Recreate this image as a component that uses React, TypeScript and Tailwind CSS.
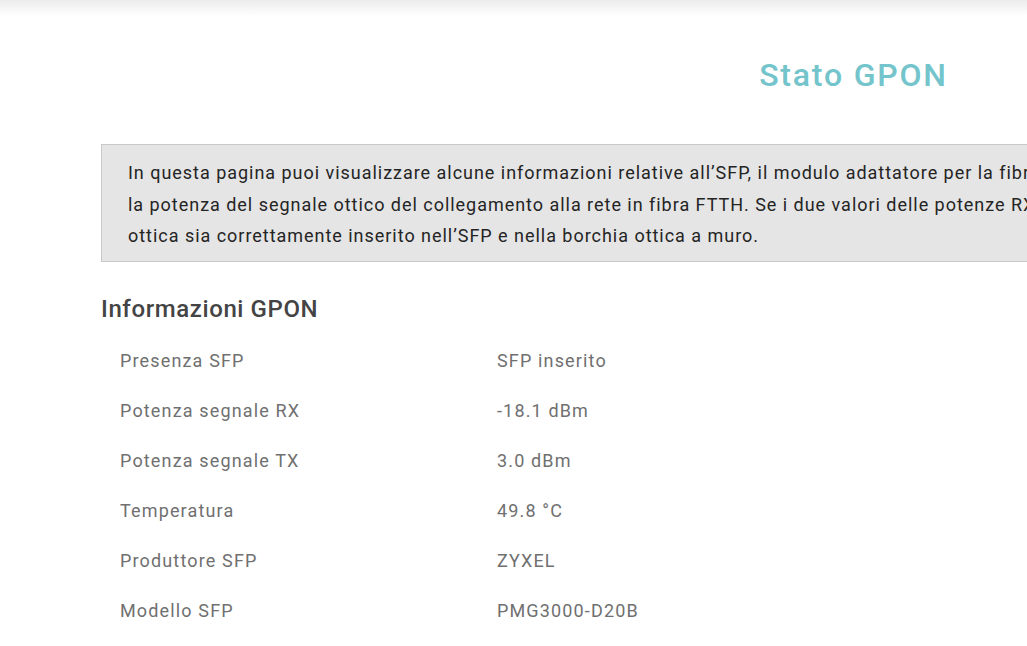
import React from 'react';

const rows: [string, string][] = [
  ['Presenza SFP', 'SFP inserito'],
  ['Potenza segnale RX', '-18.1 dBm'],
  ['Potenza segnale TX', '3.0 dBm'],
  ['Temperatura', '49.8 °C'],
  ['Produttore SFP', 'ZYXEL'],
  ['Modello SFP', 'PMG3000-D20B'],
];

export default function App() {
  return (
    <div className="relative h-[646px] w-full overflow-hidden bg-white font-['Roboto',sans-serif]">
      {/* header shadow */}
      <div className="h-[16px] w-full bg-gradient-to-b from-[#ececec] to-white" />

      <div className="ml-[101px] w-[1505px]">
        <h1 className="mt-[40px] text-center text-[32px] font-medium leading-[38px] tracking-[1.8px] text-[#73c4cb]">
          Stato GPON
        </h1>

        {/* info box */}
        <div className="mt-[50px] border border-[#c9c9c9] bg-[#e5e5e5] px-[26px] pb-[9px] pt-[12px] text-[18px] leading-[31.5px] tracking-[0.97px] text-[#242424]">
          <p className="whitespace-nowrap">
            In questa pagina puoi visualizzare alcune informazioni relative all’SFP, il modulo adattatore per la fibra ottica, come la temperatura e il modello, e verificare
          </p>
          <p className="whitespace-nowrap">
            la potenza del segnale ottico del collegamento alla rete in fibra FTTH. Se i due valori delle potenze RX e TX non sono corretti, verifica che il cavo in fibra
          </p>
          <p className="whitespace-nowrap">
            ottica sia correttamente inserito nell’SFP e nella borchia ottica a muro.
          </p>
        </div>

        <h2 className="mt-[31px] text-[24px] font-medium leading-[32px] tracking-[0.6px] text-[#444444]">
          Informazioni GPON
        </h2>

        <div className="mt-[11px] text-[18px] leading-[50px] tracking-[1.15px] text-[#707070]">
          {rows.map(([label, value]) => (
            <div key={label} className="flex">
              <div className="w-[396px] pl-[19px]">{label}</div>
              <div>{value}</div>
            </div>
          ))}
        </div>
      </div>
    </div>
  );
}
